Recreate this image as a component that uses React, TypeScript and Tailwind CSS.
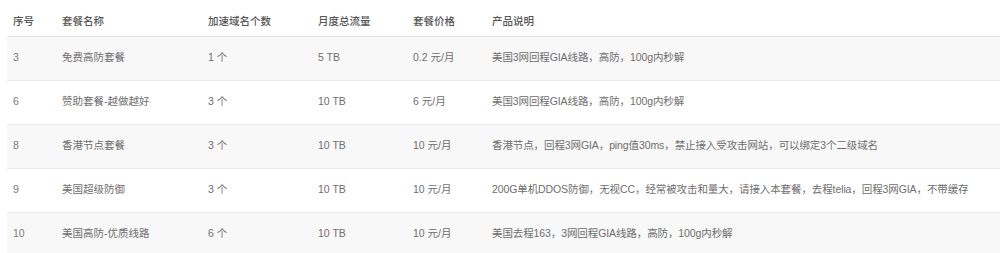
const rows = [
  { id: '3', name: '免费高防套餐', domains: '1 个', traffic: '5 TB', price: '0.2 元/月', desc: '美国3网回程GIA线路，高防，100g内秒解' },
  { id: '6', name: '赞助套餐-越做越好', domains: '3 个', traffic: '10 TB', price: '6 元/月', desc: '美国3网回程GIA线路，高防，100g内秒解' },
  { id: '8', name: '香港节点套餐', domains: '3 个', traffic: '10 TB', price: '10 元/月', desc: '香港节点，回程3网GIA，ping值30ms，禁止接入受攻击网站，可以绑定3个二级域名' },
  { id: '9', name: '美国超级防御', domains: '3 个', traffic: '10 TB', price: '10 元/月', desc: '200G单机DDOS防御，无视CC，经常被攻击和量大，请接入本套餐，去程telia，回程3网GIA，不带缓存' },
  { id: '10', name: '美国高防-优质线路', domains: '6 个', traffic: '10 TB', price: '10 元/月', desc: '美国去程163，3网回程GIA线路，高防，100g内秒解' },
]

const FONT = "font-['Liberation_Sans','Noto_Sans_CJK_SC',sans-serif]"

export default function App() {
  return (
    <div className={`h-[253px] w-[1000px] overflow-hidden bg-white pl-[7px] ${FONT}`}>
      <table className="w-[993px] table-fixed border-collapse text-left text-[10.5px]">
        <colgroup>
          <col className="w-[49px]" />
          <col className="w-[146px]" />
          <col className="w-[110px]" />
          <col className="w-[95px]" />
          <col className="w-[79px]" />
          <col />
        </colgroup>
        <thead>
          <tr className="h-[36px] border-b border-[#e2e2e2]">
            {['序号', '套餐名称', '加速域名个数', '月度总流量', '套餐价格', '产品说明'].map((h) => (
              <th key={h} className="px-[6px] pt-[8px] align-middle font-medium text-[#555]">
                {h}
              </th>
            ))}
          </tr>
        </thead>
        <tbody>
          {rows.map((r, i) => (
            <tr key={r.id} className={`h-[44px] border-b border-[#eaeaea] ${i % 2 === 0 ? 'bg-[#f8f8f8]' : 'bg-white'}`}>
              <td className="px-[6px] text-[#7a7a7a]">{r.id}</td>
              <td className="px-[6px] text-[#6e6e6e]">{r.name}</td>
              <td className="px-[6px] text-[#6e6e6e]">{r.domains}</td>
              <td className="px-[6px] text-[#6e6e6e]">{r.traffic}</td>
              <td className="px-[6px] text-[#6e6e6e]">{r.price}</td>
              <td className="px-[6px] text-[#6e6e6e] tracking-[-0.1px]">{r.desc}</td>
            </tr>
          ))}
        </tbody>
      </table>
    </div>
  )
}
